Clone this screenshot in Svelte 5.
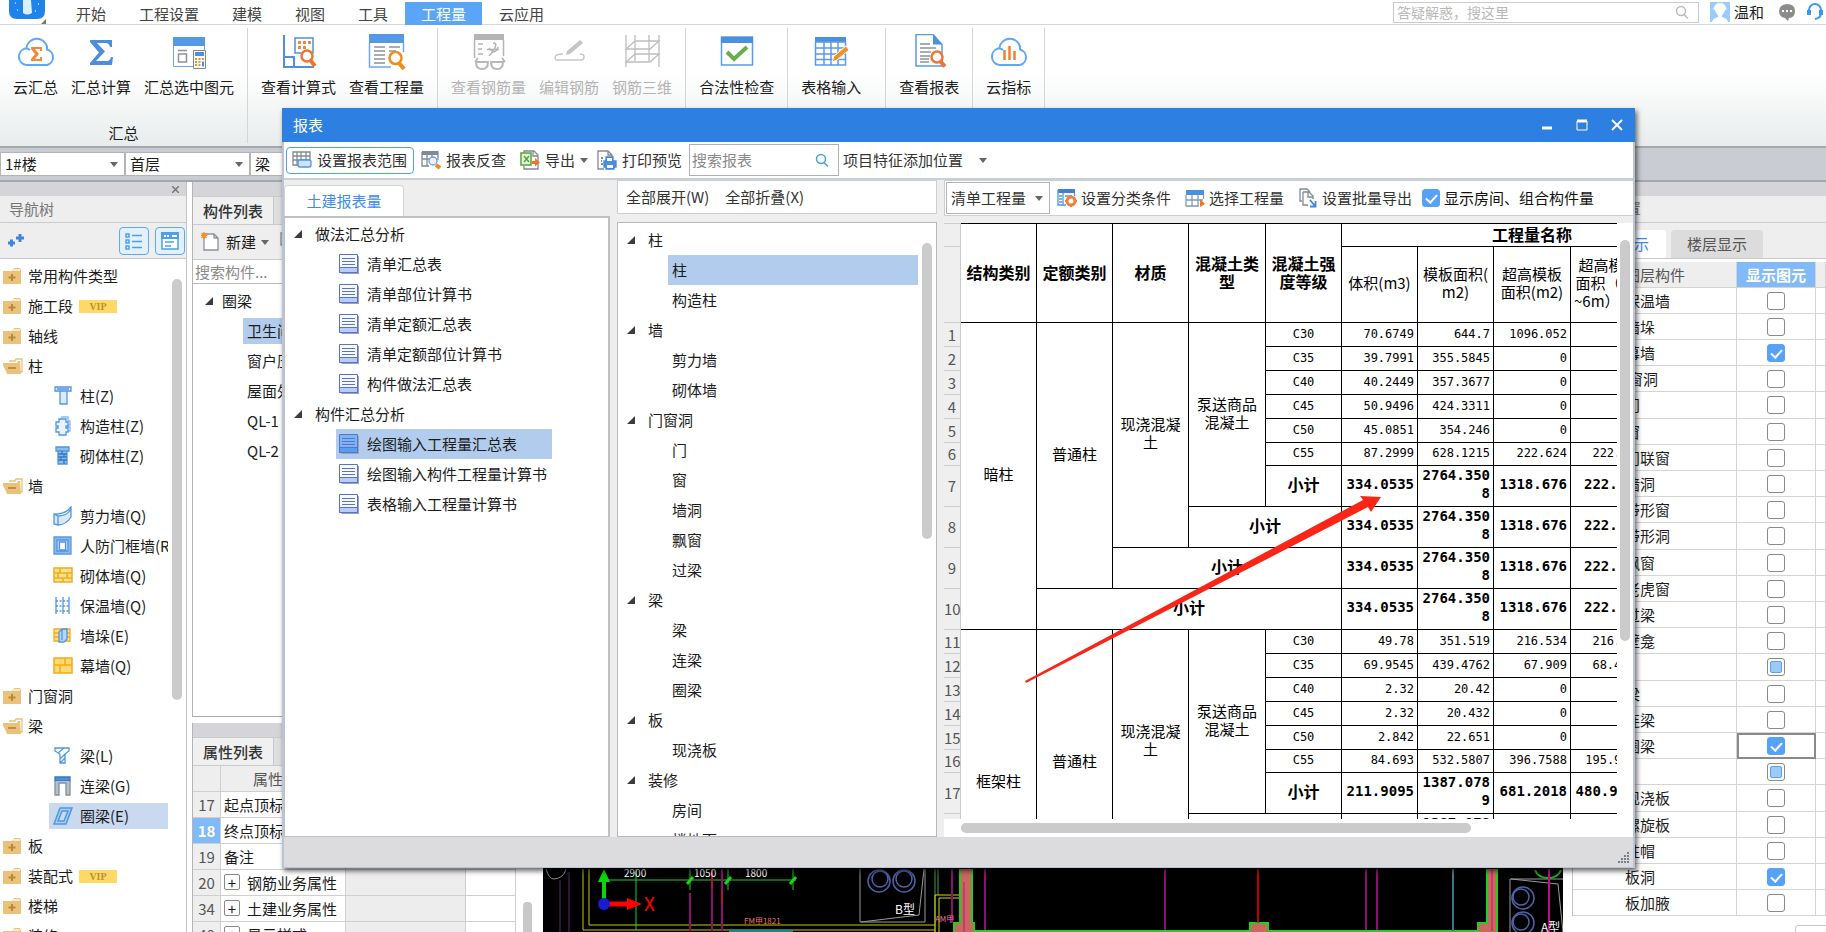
<script lang="ts">
	const menus = ['开始', '工程设置', '建模', '视图', '工具', '工程量', '云应用'];

	const ribbon = [
		{
			label: '汇总',
			items: [
				{ icon: 'cloudSum', text: '云汇总' },
				{ icon: 'sum', text: '汇总计算' },
				{ icon: 'sumSelected', text: '汇总选中图元' }
			]
		},
		{
			items: [
				{ icon: 'formula', text: '查看计算式' },
				{ icon: 'quantity', text: '查看工程量' }
			]
		},
		{
			disabled: true,
			items: [
				{ icon: 'rebar', text: '查看钢筋量' },
				{ icon: 'editRebar', text: '编辑钢筋' },
				{ icon: 'rebar3d', text: '钢筋三维' }
			]
		},
		{ items: [{ icon: 'check', text: '合法性检查' }] },
		{ wide: true, items: [{ icon: 'tableInput', text: '表格输入' }] },
		{ items: [{ icon: 'report', text: '查看报表' }] },
		{ items: [{ icon: 'cloudIndex', text: '云指标' }] }
	];

	const nav = [
		{ text: '常用构件类型' },
		{ text: '施工段', vip: true },
		{ text: '轴线' },
		{
			text: '柱',
			children: [
				{ icon: 'column', text: '柱(Z)' },
				{ icon: 'tieColumn', text: '构造柱(Z)' },
				{ icon: 'brickColumn', text: '砌体柱(Z)' }
			]
		},
		{
			text: '墙',
			children: [
				{ icon: 'shearWall', text: '剪力墙(Q)' },
				{ icon: 'frameWall', text: '人防门框墙(RF)' },
				{ icon: 'brickWall', text: '砌体墙(Q)' },
				{ icon: 'insulation', text: '保温墙(Q)' },
				{ icon: 'buttress', text: '墙垛(E)' },
				{ icon: 'curtainWall', text: '幕墙(Q)' }
			]
		},
		{ text: '门窗洞' },
		{
			text: '梁',
			children: [
				{ icon: 'beam', text: '梁(L)' },
				{ icon: 'linkBeam', text: '连梁(G)' },
				{ icon: 'ringBeam', text: '圈梁(E)', selected: true }
			]
		},
		{ text: '板' },
		{ text: '装配式', vip: true },
		{ text: '楼梯' },
		{ text: '装修' }
	];

	const components = ['卫生间翻边', '窗户压顶', '屋面外墙', 'QL-1', 'QL-2'];

	const properties = [
		{ no: 17, name: '起点顶标高' },
		{ no: 18, name: '终点顶标高', selected: true },
		{ no: 19, name: '备注' },
		{ no: 20, name: '钢筋业务属性', group: true },
		{ no: 34, name: '土建业务属性', group: true },
		{ no: 40, name: '显示样式', group: true }
	];

	const reportTree = [
		{
			text: '做法汇总分析',
			children: ['清单汇总表', '清单部位计算书', '清单定额汇总表', '清单定额部位计算书', '构件做法汇总表']
		},
		{
			text: '构件汇总分析',
			children: ['绘图输入工程量汇总表', '绘图输入构件工程量计算书', '表格输入工程量计算书']
		}
	];
	let activeReport = $state('绘图输入工程量汇总表');

	const elementTree = [
		{ text: '柱', children: ['柱', '构造柱'] },
		{ text: '墙', children: ['剪力墙', '砌体墙'] },
		{ text: '门窗洞', children: ['门', '窗', '墙洞', '飘窗', '过梁'] },
		{ text: '梁', children: ['梁', '连梁', '圈梁'] },
		{ text: '板', children: ['现浇板'] },
		{ text: '装修', children: ['房间', '楼地面'] }
	];
	let activeElement = $state('柱/柱');

	const colWidths = [17, 76, 76, 76, 77, 76, 76, 76, 77, 76, 76];
	const dimensions = ['结构类别', '定额类别', '材质', '混凝土类型', '混凝土强度等级'];
	const measures = ['体积(m3)', '模板面积(\nm2)', '超高模板\n面积(m2)', '超高模板\n面积（3.6\n~6m）(m2)', ''];

	const groups = [
		{
			name: '暗柱',
			start: 1,
			rows: [
				['C30', '70.6749', '644.7', '1096.052', '', ''],
				['C35', '39.7991', '355.5845', '0', '', ''],
				['C40', '40.2449', '357.3677', '0', '', ''],
				['C45', '50.9496', '424.3311', '0', '', ''],
				['C50', '45.0851', '354.246', '0', '', ''],
				['C55', '87.2999', '628.1215', '222.624', '222.624', '']
			],
			total: ['334.0535', '2764.3508', '1318.676', '222.624', '']
		},
		{
			name: '框架柱',
			start: 11,
			rows: [
				['C30', '49.78', '351.519', '216.534', '216.534', ''],
				['C35', '69.9545', '439.4762', '67.909', '68.4762', ''],
				['C40', '2.32', '20.42', '0', '', ''],
				['C45', '2.32', '20.432', '0', '', ''],
				['C50', '2.842', '22.651', '0', '', ''],
				['C55', '84.693', '532.5807', '396.7588', '195.9588', '']
			],
			total: ['211.9095', '1387.0789', '681.2018', '480.9688', '']
		}
	];

	let layers = $state([
		{ text: '保温墙', on: false },
		{ text: '墙垛', on: false },
		{ text: '幕墙', on: true },
		{ text: '门窗洞', on: false, parent: true },
		{ text: '门', on: false },
		{ text: '窗', on: false },
		{ text: '门联窗', on: false },
		{ text: '墙洞', on: false },
		{ text: '带形窗', on: false },
		{ text: '带形洞', on: false },
		{ text: '飘窗', on: false },
		{ text: '老虎窗', on: false },
		{ text: '过梁', on: false },
		{ text: '壁龛', on: false },
		{ text: '梁', on: false, parent: true, partial: true },
		{ text: '梁', on: false },
		{ text: '连梁', on: false },
		{ text: '圈梁', on: true, current: true },
		{ text: '板', on: false, parent: true, partial: true },
		{ text: '现浇板', on: false },
		{ text: '螺旋板', on: false },
		{ text: '柱帽', on: false },
		{ text: '板洞', on: true },
		{ text: '板加腋', on: false }
	]);
</script>

{#snippet ribbonIcon(name: string)}
	<svg width="40" height="36" viewBox="0 0 40 36" fill="none" aria-hidden="true">
		{#if name === 'cloudSum' || name === 'cloudIndex'}
			<path d="M10 31a8.500 8.500 0 0 1-1-16.500q3-.5 5 1.500M10.500 13.500A10.500 10.500 0 0 1 31 12.500v3A8 8 0 0 1 31 31H10" stroke="#5fa8f5" stroke-width="2" />
			{#if name === 'cloudSum'}
				<path d="M15 13h11v4h-2v-2h-5l4 5-4 5h5v-2h2v4H15v-2l4-5-4-5z" fill="#f08a3c" />
			{:else}
				<path d="M15.500 16v10M20.500 12v14M25.500 17v9" stroke="#f08038" stroke-width="2.500" />
			{/if}
		{:else if name === 'sum'}
			<path d="M9 6h22v7h-2q-1-4-4-4h-9l8 8.500L15 27h11q3 0 4-4h2l-1 8H9v-2l9-10.500L9 8z" fill="#4a8edd" />
		{:else if name === 'sumSelected'}
			<path d="M4 3h32v9H4z" fill="#5598e5" />
			<path d="M4.500 12v20.500H24M35.500 12v5" stroke="#6fa6e6" />
			<path d="M9 16.500h9M9.500 20h8v8h-8z" stroke="#8a939b" stroke-width="1.500" />
			<path d="M24.500 16.500h12v18h-12z" stroke="#7c868e" fill="#fff" />
			<path d="M26 18h9v4h-9z" fill="#4a90e2" />
			<path d="M26 25h2M29.500 25h2M33 25h2M26 28h2M29.500 28h2M26 31h2M29.500 31h2" stroke="#f08a3c" stroke-width="2" />
			<path d="M33 27.500h2v5h-2z" fill="#4a90e2" />
		{:else if name === 'formula'}
			<path d="M5 1v32h30M5 23h10v10" stroke="#5090d8" stroke-width="2" />
			<path d="M16 4h18v15H16z" stroke="#5090d8" stroke-width="1.500" fill="#fff" />
			<path d="M19 8.500h3M24 8.500h3M29 8.500h3M19 13.500h3M24 13.500h3" stroke="#f0863c" stroke-width="3" />
			<circle cx="28" cy="22" r="5.500" stroke="#ee7530" stroke-width="2.500" fill="#fff" />
			<path d="M31.500 26.500l4.500 5.500" stroke="#ee7530" stroke-width="4" />
		{:else if name === 'quantity'}
			<path d="M2 0h35v9H2z" fill="#5598e5" />
			<path d="M2.500 9v24H24M36.500 9v9" stroke="#6fa6e6" stroke-width="1.500" />
			<path d="M7 13h11M22 13h11M7 17h11M22 17h7M7 21h11M7 25h11M7 29h11" stroke="#8a939b" stroke-width="1.500" />
			<circle cx="28.500" cy="24" r="6" stroke="#f08c1c" stroke-width="2.500" fill="#fff" />
			<path d="M32 29l5 6" stroke="#f08c1c" stroke-width="4" />
		{:else if name === 'rebar'}
			<path d="M5 0h30v6H5z" fill="#b4b4b4" />
			<path d="M5.500 6v18M34.500 6v16M9 10h5M9 15h4M9 20h5M18 15.500h12M24 9q5 0 1 6.500T20 21M29 13q-3 9-9 1" stroke="#b4b4b4" stroke-width="1.500" />
			<path d="M6 28l3-4M36 28l-3-4M7 28h12q0 7-6 7t-6-7zM22 28h12q0 7-6 7t-6-7z" stroke="#b8b8b8" stroke-width="2" />
		{:else if name === 'editRebar'}
			<path d="M14 20Q6 20 6 23.500T10 26h22q3 0 3-3t-4-3" stroke="#c8c8c8" stroke-width="1.500" />
			<path d="M17 21l1-4L31 6l3 3-13 11z" fill="#c4c4c4" />
		{:else if name === 'rebar3d'}
			<path d="M4 1v32M13 1v26M27 1v26M37 1v32M4 15h24l9-8H13zM4 28h24l9-8H13z" stroke="#bdbdbd" stroke-width="1.300" />
		{:else if name === 'check'}
			<path d="M4.500 3h31v28h-31z" stroke="#5a9be6" fill="#fff" stroke-width="1.500" />
			<path d="M4 3h32v6H4z" fill="#4a90de" />
			<path d="M10 18l7 7 13-12" stroke="#69ad4e" stroke-width="4" />
		{:else if name === 'tableInput'}
			<path d="M4 3h31v5H4z" fill="#4a90de" />
			<path d="M4.500 8h30v23h-30zM4 14h31M4 20h31M4 25.500h31M13 8v23M20 8v23M27 8v23" stroke="#5a9be6" stroke-width="1.500" />
			<path d="M21 28l2-6 12-10 3 4-12 10z" fill="#f09022" stroke="#fff" />
		{:else if name === 'report'}
			<path d="M7 .500h17l9 10V32H7z" stroke="#5a9be6" stroke-width="1.500" fill="#fff" />
			<path d="M24 .500v10h9z" fill="#4a90de" />
			<path d="M11 10h10M11 14h16M11 18h11M11 22h10M11 25h9M11 28h9" stroke="#8a939b" stroke-width="1.500" />
			<circle cx="28" cy="23" r="5.500" stroke="#ee7530" stroke-width="2.500" fill="#fff" />
			<path d="M31.500 27.500l4.500 5" stroke="#ee7530" stroke-width="4" />
		{/if}
	</svg>
{/snippet}

{#snippet icon(name: string)}
	<svg width="20" height="20" viewBox="0 0 20 20" fill="none" stroke="#4f97df" stroke-width="1.300" aria-hidden="true">
		{#if name === 'folder'}
			<path d="M0 5h9l2-3h6l1 2v14H0z" fill="#eac27c" stroke="none" />
			<path d="M10 4h7" stroke="#fff" />
			<path d="M9 8v7M5.500 11.500h7" stroke="#b98a35" stroke-width="2" />
		{:else if name === 'folderOpen'}
			<path d="M6 5h6l1-2h6v13h-2" fill="#fff" stroke="#eac27c" />
			<path d="M-1 7h15l1-2h2l1 13H4z" fill="#eac27c" stroke="none" />
			<path d="M5 12h8" stroke="#a88035" stroke-width="1.500" />
		{:else if name === 'column'}
			<path d="M2 1h16v4H2zM7 5v13h7V5M4 3h12" fill="#dcebfa" />
		{:else if name === 'tieColumn'}
			<path d="M8 1h7v4h2v4h-2v2h2v4h-2" stroke="#8dbbea" />
			<path d="M6 3h7v3h2v4h-2v2h2v4h-2v3H6v-3H3v-4h2v-2H3V6h3z" fill="#eaf3fc" />
		{:else if name === 'brickColumn'}
			<path d="M3 1h13v4H3zM5 5v13h9V5" fill="#8dbbea" />
			<path d="M5 8h9M5 11h9M5 14h9M9 5v3M11 8v3M8 11v3M11 14v4" stroke="#3678bf" />
		{:else if name === 'shearWall'}
			<path d="M1 8q11 1 17-7v10q-5 8-13 8l-4-1zM1 8l4 2q9 0 13-7M5 10v9" fill="#dbe8f8" />
		{:else if name === 'frameWall'}
			<path d="M1 1h17v17H1z" fill="#8db6ec" stroke="#5d97e0" />
			<path d="M4 4h11v11H4z" fill="#bcd5f5" />
			<path d="M6.500 6h6v8h-6z" fill="#fff" />
		{:else if name === 'brickWall'}
			<path d="M1 2h18v14H1zM1 7h18M1 12h18M7 2v5M14 7v5M5 7v5M10 12v4" fill="#ffe08c" stroke="#f0ac1c" stroke-width="1.500" />
		{:else if name === 'insulation'}
			<path d="M3 1v17M10 1v17M16 1v17" />
			<path d="M3 5h13M3 10h13M3 15h13" stroke-dasharray="2 1.500" />
		{:else if name === 'buttress'}
			<path d="M1 3h16v12H1zM1 7h16M1 11h16" fill="#ffe08c" stroke="#f0ac1c" />
			<path d="M6 6l3-3h5v10l-3 3H6zM9 3v11" fill="#b7d6f7" />
		{:else if name === 'curtainWall'}
			<path d="M1 2h18v15H1zM1 9h18M12 2v7M7 9v8" fill="#ffd970" stroke="#f0ac1c" stroke-width="1.500" />
		{:else if name === 'beam'}
			<path d="M2 2h14v3l-4 3v9H7V8L2 5zM5 7l6-5M7 13l5-5M7 17l5-5" fill="#fff" />
		{:else if name === 'linkBeam'}
			<path d="M2 1h15v4H2z" fill="#4a90de" stroke="#3678bf" />
			<path d="M2 5v14h4V7h7v12h4V5" fill="#b7c0c8" stroke="#84919c" />
		{:else if name === 'ringBeam'}
			<path d="M7 2h12l-6 16H1zM9 5h6l-4 10H5z" fill="#a9cdf4" fill-rule="evenodd" stroke-width="1.500" />
		{:else if name === 'range'}
			<path d="M1 2h17v13H1zM1 6h17M1 10h17M5 2v13M9 2v13M14 2v13" stroke="#7f8b95" />
			<rect x="6" y="10" width="13" height="7" rx="2" fill="#cfe4fb" />
		{:else if name === 'trace'}
			<path d="M1 1h16v4H1z" fill="#7f8b95" stroke="none" />
			<path d="M1 2h16v8M1 2v14h7M1 9h8M6 5v11M11 5v3" stroke="#7f8b95" />
			<circle cx="12" cy="11" r="4" fill="#eaf3fd" stroke="#6b9ee0" />
			<path d="M15 15l4 3" stroke="#f08a1c" stroke-width="4" />
		{:else if name === 'export'}
			<path d="M4 3V1h10l4 4v14H4v-3M13 1v5h5" stroke="#7f8b95" />
			<path d="M1 3h10v12H1z" fill="#e4f3dd" stroke="#5ba33b" stroke-width="1.500" />
			<path d="M4 6l5 6M9 6l-5 6" stroke="#5ba33b" stroke-width="1.500" />
			<path d="M12 11h3V8l5 4.500-5 4V14h-3z" fill="#f0742c" stroke="none" />
		{:else if name === 'print'}
			<path d="M7 19H1V1h10l4 4v3M11 1v4h4" stroke="#7f8b95" />
			<path d="M4 8h2M4 11h1M4 14h2" stroke="#7f8b95" stroke-width="2" />
			<path d="M9 7h7v4h3v6h-2v2H9v-2H7v-6h2z" fill="#4a90e2" stroke="#3f86da" />
			<path d="M10 8h5v3h-5zM10 15h6v3h-6z" fill="#fff" stroke="none" />
		{:else if name === 'classify'}
			<path d="M1 1h17v4H1z" fill="#3f80d0" stroke="none" />
			<path d="M1 2v15h8M17.500 5v3M6 5v12" />
			<path d="M2 8h3M2 11h3M2 14h3M8 8h6" />
			<circle cx="14" cy="13" r="4" stroke="#f08038" stroke-width="3" fill="#fff" />
			<path d="M14 7v2M14 17v2M8 13h2M18 13h2" stroke="#f08038" stroke-width="2" />
		{:else if name === 'choose'}
			<path d="M1 2h18v5H1z" fill="#4a90de" stroke="none" />
			<path d="M1 7v11h13M18.500 7v4M1 12h17M7 7v11M13 7v11" stroke="#7f9bb5" />
			<path d="M15 11l5 5-5 3z" fill="#f0742c" stroke="none" />
		{:else if name === 'batch'}
			<path d="M4 13H2V1h7l3 3M5 4h6l4 4v3M5 4v13h5M10 4v5h5" stroke="#7f8b95" />
			<path d="M12 12l5 6M17.500 13v5.500H12" stroke="#3f86da" stroke-width="1.800" />
		{:else if name === 'new'}
			<path d="M3 2h10l4 4v12H3zM13 2v4h4" fill="#fff" stroke="#8a939b" />
			<path d="M3 0v7M-.500 3.500h7M.500 1l5 5M5.500 1l-5 5" stroke="#f0902c" />
		{/if}
	</svg>
{/snippet}

{#snippet caret()}
	<svg class="caret" width="8" height="5" viewBox="0 0 8 5" aria-hidden="true"><path d="M0 0h8L4 5z" fill="#666" /></svg>
{/snippet}

{#snippet twisty()}
	<svg width="9" height="8" viewBox="0 0 9 8" aria-hidden="true"><path d="M0 8L8 0v8z" fill="#3c3c3c" /></svg>
{/snippet}

{#snippet magnifier(color: string)}
	<svg width="14" height="14" viewBox="0 0 14 14" fill="none" stroke={color} stroke-width="1.500" aria-hidden="true">
		<circle cx="6" cy="6" r="4.500" /><path d="M9 9.500l4 4" />
	</svg>
{/snippet}

<div class="app">
	<header class="menubar">
		<svg class="logo" width="46" height="25" viewBox="0 0 46 25" aria-hidden="true">
			<path d="M9 0h36v11q0 8-8 8H17q-8 0-8-8z" fill="#1f83ea" />
			<path d="M23 0h8l1 13q-5 3-9 0z" fill="#d8f0ff" />
			<path d="M15 3h1M38 4h1M35 11h1M17 10h1" stroke="#9bd4ff" stroke-width="2" />
			<path d="M46 24h-5l5-5z" fill="#777" />
		</svg>
		<nav>
			{#each menus as menu}
				<button class:active={menu === '工程量'}>{menu}</button>
			{/each}
		</nav>
		<label class="ask">
			<input type="text" placeholder="答疑解惑，搜这里" aria-label="答疑解惑" />
			{@render magnifier('#bbb')}
		</label>
		<button class="user">
			<svg width="20" height="20" viewBox="0 0 20 20" aria-hidden="true">
				<path d="M0 0h20v20H0z" fill="#9ccbfa" />
				<path d="M4 6q1-5 6-5t6 5l1 1-2 1q-1 4-3 5v2q5 1 6 5H2q1-4 6-5v-2Q6 12 5 8L3 7z" fill="#fff" />
			</svg>
			温和
		</button>
		<svg width="18" height="18" viewBox="0 0 18 18" aria-hidden="true">
			<path d="M9 1q8 0 8 7t-6 7l-1 3-3-3Q1 14 1 8t8-7z" fill="#8c8c8c" />
			<path d="M4 8h2M8 8h2M12 8h2" stroke="#fff" stroke-width="2" />
		</svg>
		<svg width="18" height="18" viewBox="0 0 18 18" fill="none" stroke="#3f97f0" aria-hidden="true">
			<path d="M3 9V7a6 6 0 0 1 12 0v3q0 5-6 6" stroke-width="2" />
			<path d="M3 7v5M15 7v5" stroke-width="4" />
		</svg>
	</header>

	<section class="ribbon">
		{#each ribbon as group}
			<div class="group" class:wide={group.wide}>
				<div class="tools">
					{#each group.items as item}
						<button disabled={group.disabled}>
							{@render ribbonIcon(item.icon)}
							{item.text}
						</button>
					{/each}
				</div>
				<span>{group.label ?? ''}</span>
			</div>
		{/each}
	</section>

	<section class="floorbar">
		<label class="pick"><select aria-label="楼栋"><option>1#楼</option></select>{@render caret()}</label>
		<label class="pick"><select aria-label="楼层"><option>首层</option></select>{@render caret()}</label>
		<label class="pick"><select aria-label="构件类型"><option>梁</option></select>{@render caret()}</label>
	</section>

	<main class="workspace">
		<aside class="nav">
			<div class="strip">
				<button aria-label="关闭"><svg width="7" height="7" viewBox="0 0 7 7"><path d="M0 0l7 7M7 0L0 7" stroke="#777" stroke-width="1.500" /></svg></button>
			</div>
			<h2>导航树</h2>
			<div class="navtools">
				<svg width="16" height="13" viewBox="0 0 16 13" stroke="#3f86da" stroke-width="3" aria-hidden="true">
					<path d="M0 9h7M3.500 5.500v7M8 4h8M12 0v8" />
				</svg>
				<button class="toggle" aria-label="列表">
					<svg width="18" height="18" viewBox="0 0 18 18" fill="none" stroke="#4f9fee" stroke-width="1.500" aria-hidden="true">
						<path d="M1 2h3v3H1zM1 8h3v3H1zM1 14h3v3H1zM7 3.500h10M7 9.500h10M7 15.500h10" />
					</svg>
				</button>
				<button class="toggle" aria-label="面板">
					<svg width="18" height="18" viewBox="0 0 18 18" fill="none" stroke="#4f9fee" stroke-width="1.500" aria-hidden="true">
						<path d="M1 1h16v16H1z" fill="#fff" /><path d="M0 0h18v7H0z" fill="#4f9fee" stroke="none" />
						<path d="M3 4h2M6 4h2M11 4h5" stroke="#fff" stroke-width="2" /><path d="M4 10h9M4 14h6" />
					</svg>
				</button>
			</div>
			<ul class="navtree">
				{#each nav as node}
					<li>
						<button class="folder">
							{@render icon(node.children ? 'folderOpen' : 'folder')}
							{node.text}
							{#if node.vip}<em>VIP</em>{/if}
						</button>
						{#each node.children ?? [] as child}
							<button class="leaf" class:selected={child.selected}>
								{@render icon(child.icon)}
								{child.text}
							</button>
						{/each}
					</li>
				{/each}
			</ul>
			<span class="thumb"></span>
		</aside>

		<div class="side">
			<section class="complist">
				<div class="strip"></div>
				<div class="tabs"><button>构件列表</button></div>
				<div class="comptools">
					<button>{@render icon('new')} 新建 {@render caret()}</button>
					<button aria-label="复制">{@render icon('batch')}</button>
				</div>
				<input type="text" placeholder="搜索构件..." aria-label="搜索构件" />
				<div class="comptree">
					<button class="root">{@render twisty()} 圈梁</button>
					{#each components as name, i}
						<button class="item" class:selected={i === 0}>{name}</button>
					{/each}
				</div>
			</section>
			<section class="props">
				<div class="strip"></div>
				<div class="tabs"><button>属性列表</button></div>
				<div class="proprow">
					<table>
						<colgroup><col class="no" /><col class="name" /><col /><col class="extra" /></colgroup>
						<thead>
							<tr><th></th><th>属性名称</th><th></th><th></th></tr>
						</thead>
						<tbody>
							{#each properties as p}
								<tr>
									<th class:selected={p.selected}>{p.no}</th>
									<td>{#if p.group}<button class="plus" aria-label="展开">+</button>{/if}{p.name}</td>
									<td class:shade={p.group}></td>
									<td></td>
								</tr>
							{/each}
						</tbody>
					</table>
					<span class="track"><i></i></span>
				</div>
			</section>
		</div>

		<section class="canvas">
			<svg height="63" viewBox="543 869 1020 63" preserveAspectRatio="xMinYMax slice" fill="none" aria-label="平面图">
				<path d="M546 869q3 10 8 10 10-1 12-10" stroke="#8a8a8a" />
				<path d="M560 880v52M569 872v60" stroke="#5a2a6a" />
				<path d="M583 869v61h352M589 869v56h346" stroke="#c8c800" />
				<path d="M608 880h188M636 869v61M690 869v21M728 869v21M793 869v21" stroke="#1fd01f" />
				<path d="M687 884l6-7M725 884l6-7M790 884l6-7" stroke="#1fd01f" stroke-width="3" />
				<path d="M690 893v38M712 869v62M722 869v62" stroke="#8c1070" stroke-width="2" />
				<path d="M712 869v20M722 890v14" stroke="#d01010" />
				<path d="M604 900v-20" stroke="#0bd60b" stroke-width="4" />
				<path d="M598 882l6-13 6 13z" fill="#0bd60b" />
				<path d="M609 904h22" stroke="#f00" stroke-width="5" />
				<path d="M627 898l15 6-15 6z" fill="#f00" />
				<circle cx="604" cy="904" r="6" fill="#1a1ad0" />
				<path d="M729 931h64" stroke="#11898f" stroke-width="3" />
				<path d="M860 869v53h65v-53M924 869l-5 46-58 7" stroke="#9a9a9a" />
				<g stroke="#4d62a8" stroke-width="1.500">
					<circle cx="879" cy="881" r="11" /><circle cx="880" cy="879" r="8" />
					<circle cx="904" cy="881" r="11" /><circle cx="904" cy="879" r="8" />
					<circle cx="1523" cy="898" r="11" /><circle cx="1521" cy="897" r="8" />
					<circle cx="1523" cy="923" r="11" /><circle cx="1521" cy="922" r="8" />
				</g>
				<path d="M935 869v63M938 869v26" stroke="#3ea04a" />
				<path d="M935 895h25M935 932v-37M939 932v-34h21" stroke="#d8d800" />
				<path d="M952 869v54M985 869v62M1165 869v62M1366 869v62M1377 869v62" stroke="#8c1070" stroke-width="2" />
				<path d="M960 869v54h-6v10M972 869v54h2v8h276v-8h18v8h210v-8h9v-54M1497 869v64" stroke="#1fd01f" stroke-width="2" />
				<path d="M961 869h10v54h2v10h-18v-9h6zM1251 924h16v8h-16zM1488 869h8v64h-17v-9h9z" fill="#cc6660" />
				<path d="M964 882v50M1492 869v62" stroke="#c01080" />
				<path d="M1258 869v54" stroke="#f00" stroke-width="1.500" />
				<path d="M1453 869v62" stroke="#3a7686" stroke-width="2" />
				<path d="M1563 879h-53v53M1511 879l47 5 5 48" stroke="#9a9a9a" />
				<path d="M1535 870q3 8 13 8t13-8" stroke="#1fb01f" stroke-width="2" />
				<path d="M1549 869v63" stroke="#c01080" stroke-width="2" />
				<g fill="#fff" font-size="10">
					<text x="624" y="877">2900</text>
					<text x="694" y="877">1050</text>
					<text x="745" y="877">1800</text>
					<text x="895" y="914" font-size="12">B型</text>
					<text x="1541" y="932" font-size="12">A型</text>
				</g>
				<text x="644" y="911" fill="#f00" font-size="19">X</text>
				<text x="744" y="924" fill="#f07070" font-size="8">FM甲1821</text>
				<text x="935" y="922" fill="#f070b0" font-size="8">AM甲</text>
			</svg>
		</section>

		<aside class="layers">
			<div class="strip"></div>
			<h2>显示设置</h2>
			<div class="layertabs">
				<button class="on">图元显示</button>
				<button>楼层显示</button>
			</div>
			<table>
				<colgroup><col /><col class="show" /><col class="rest" /></colgroup>
				<thead>
					<tr><th>图层构件</th><th class="hot">显示图元</th><th></th></tr>
				</thead>
				<tbody>
					{#each layers as layer}
						<tr>
							<td class:parent={layer.parent}>{layer.text}</td>
							<td class="box" class:current={layer.current}>
								<input type="checkbox" bind:checked={layer.on} indeterminate={layer.partial ?? false} aria-label={layer.text} />
							</td>
							<td></td>
						</tr>
					{/each}
				</tbody>
			</table>
			<button class="reset" aria-label="恢复默认"></button>
		</aside>
	</main>

	<section class="dialog" role="dialog" aria-label="报表">
		<header class="titlebar">
			<h1>报表</h1>
			<button aria-label="最小化"><svg width="12" height="12" viewBox="0 0 12 12"><path d="M1 9h10" stroke="#fff" stroke-width="3" /></svg></button>
			<button aria-label="最大化"><svg width="12" height="12" viewBox="0 0 12 12"><path d="M1 2h10v9H1z" fill="none" stroke="#fff" /><path d="M1 2h10" stroke="#fff" stroke-width="3" /></svg></button>
			<button aria-label="关闭"><svg width="12" height="12" viewBox="0 0 12 12"><path d="M1 1l10 10M11 1L1 11" stroke="#fff" stroke-width="2" /></svg></button>
		</header>

		<div class="toolbar">
			<button class="framed">{@render icon('range')}设置报表范围</button>
			<button>{@render icon('trace')}报表反查</button>
			<button class="export">{@render icon('export')}导出{@render caret()}</button>
			<button>{@render icon('print')}打印预览</button>
			<label class="find">
				<input type="text" placeholder="搜索报表" aria-label="搜索报表" />
				{@render magnifier('#4a9fcf')}
			</label>
			<button class="position">项目特征添加位置{@render caret()}</button>
		</div>

		<div class="panes">
			<div class="reports">
				<button class="tab">土建报表量</button>
				<div class="tree">
					{#each reportTree as node}
						<button class="root">{@render twisty()}{node.text}</button>
						{#each node.children as child}
							<button class="doc" class:selected={child === activeReport} onclick={() => (activeReport = child)}>
								<svg width="20" height="20" viewBox="0 0 20 20" fill="none" stroke="#5774c8" aria-hidden="true">
									<path d="M2 2h18v18H3l-2-2z" fill="#9aa2b8" stroke="none" />
									<path class="page" d="M.500.500h18v18H.500z" />
									<path class="foot" d="M.500 13.500h18v5H.500z" />
									<path d="M3 4.500h13M3 7.500h13M3 10.500h13" />
								</svg>
								{child}
							</button>
						{/each}
					{/each}
				</div>
			</div>

			<div class="elements">
				<div class="bar">
					<button>全部展开(W)</button>
					<button>全部折叠(X)</button>
				</div>
				<div class="tree">
					{#each elementTree as node}
						<button class="root">{@render twisty()}{node.text}</button>
						{#each node.children as child}
							{@const key = node.text + '/' + child}
							<button class="child" class:selected={key === activeElement} onclick={() => (activeElement = key)}>{child}</button>
						{/each}
					{/each}
					<span class="thumb"></span>
				</div>
			</div>

			<div class="sheet">
				<div class="bar">
					<label class="pick"><select aria-label="工程量类型"><option>清单工程量</option></select>{@render caret()}</label>
					<button>{@render icon('classify')}设置分类条件</button>
					<button>{@render icon('choose')}选择工程量</button>
					<button>{@render icon('batch')}设置批量导出</button>
					<label class="rooms"><input type="checkbox" checked />显示房间、组合构件量</label>
				</div>
				<div class="grid">
					<div class="clip">
						<table>
							<colgroup>
								{#each colWidths as w}<col style="width: {w}px" />{/each}
							</colgroup>
							<thead>
								<tr class="caption">
									<th class="num"></th>
									{#each dimensions as d}<th rowspan="2">{d}</th>{/each}
									<th colspan="5">工程量名称</th>
								</tr>
								<tr class="names">
									<th class="num"></th>
									{#each measures as m}<td class="measure">{m}</td>{/each}
								</tr>
							</thead>
							<tbody>
								{#each groups as g}
									{#each g.rows as row, i}
										<tr class={i === 5 ? 'last' : 'line'}>
											<th class="num">{g.start + i}</th>
											{#if i === 0}
												<td class="text" rowspan="10">{g.name}</td>
												<td class="text" rowspan="9">普通柱</td>
												<td class="text" rowspan="8">现浇混凝土</td>
												<td class="text" rowspan="7">泵送商品混凝土</td>
											{/if}
											{#each row as cell, c}<td class:grade={c === 0}>{cell}</td>{/each}
										</tr>
									{/each}
									{#each [1, 2, 3, 4] as span}
										<tr class="total">
											<th class="num">{g.start + 5 + span}</th>
											<th colspan={span}>小计</th>
											{#each g.total as cell}<td>{cell}</td>{/each}
										</tr>
									{/each}
								{/each}
							</tbody>
						</table>
					</div>
					<span class="vthumb"></span>
					<span class="hthumb"></span>
					<svg class="pointer" width="360" height="190" viewBox="0 0 360 190" aria-hidden="true">
						<path d="M1 186L339 5l-3-4 21 1-10 15-3-5L2 188z" fill="#f92617" />
					</svg>
				</div>
			</div>
		</div>

		<footer>
			<svg width="12" height="12" viewBox="0 0 12 12" stroke="#777f88" stroke-width="2" stroke-dasharray="2 1" aria-hidden="true">
				<path d="M0 11h12M3 8h9M6 5h6M9 2h3" />
			</svg>
		</footer>
	</section>
</div>

<style>
	:global(body) {
		background: #fff;
	}

	.app {
		position: relative;
		display: flex;
		flex-direction: column;
		height: 100vh;
		overflow: hidden;
		font-family: 'Noto Sans CJK SC', 'Noto Sans', sans-serif;
		font-size: 15px;
		line-height: 20px;
		color: #1c1c1c;
	}

	.app * {
		box-sizing: border-box;
	}

	button,
	input,
	select {
		font: inherit;
		color: inherit;
		margin: 0;
		padding: 0;
		border: 0;
		background: none;
		white-space: nowrap;
	}

	input[type='text'] {
		min-width: 0;
		outline: 0;
	}

	svg {
		flex: none;
	}

	h1,
	h2,
	ul {
		margin: 0;
		padding: 0;
		font-size: 15px;
		font-weight: 400;
		list-style: none;
	}

	table {
		border-spacing: 0;
		table-layout: fixed;
	}

	input[type='checkbox'] {
		appearance: none;
		position: relative;
		display: block;
		width: 18px;
		height: 18px;
		border: 1px solid #8a8a8a;
		border-radius: 3px;
		background: #fff;
	}

	input[type='checkbox']:checked {
		border-color: #55a2f8;
		background: #55a2f8;
	}

	input[type='checkbox']:checked::before {
		content: '';
		position: absolute;
		left: 5px;
		top: 2px;
		width: 5px;
		height: 9px;
		border: solid #fff;
		border-width: 0 2px 2px 0;
		transform: rotate(42deg);
	}

	input[type='checkbox']:indeterminate::before {
		content: '';
		position: absolute;
		inset: 2px;
		border: 1px solid #55a2f8;
		border-radius: 2px;
		background: #9ccafc;
	}

	/* menu bar */
	.menubar {
		display: flex;
		flex: none;
		align-items: center;
		height: 25px;
		border-bottom: 1px solid #d5d7d9;
		color: #444;
	}

	.menubar nav {
		display: flex;
		align-self: stretch;
		flex: 1;
		gap: 1px;
		padding-left: 14px;
	}

	.menubar nav button {
		height: 23px;
		margin-top: 2px;
		padding: 0 16px;
		line-height: 20px;
	}

	.menubar nav .active {
		background: #5ba5f8;
		color: #fff;
	}

	.ask {
		display: flex;
		align-items: center;
		width: 306px;
		height: 21px;
		padding: 0 9px 0 3px;
		border: 1px solid #c8ccd0;
	}

	.ask input {
		flex: 1;
		font-size: 14px;
	}

	.ask input::placeholder {
		color: #b9b9b9;
	}

	.user {
		display: flex;
		align-items: center;
		gap: 4px;
		margin: 0 14px 0 11px;
		color: #222;
	}

	.menubar > svg:last-child {
		margin: 0 2px 0 10px;
	}

	/* ribbon */
	.ribbon {
		display: flex;
		flex: none;
		height: 121px;
		padding-top: 3px;
		background: linear-gradient(#fff 40%, #e8ecec);
	}

	.group {
		display: flex;
		flex-direction: column;
		justify-content: space-between;
		height: 115px;
		padding: 6px 13px 0;
		border-right: 1px solid #d3d6d8;
		text-align: center;
	}

	.group.wide {
		padding-right: 24px;
	}

	.group > span {
		height: 20px;
	}

	.tools {
		display: flex;
		gap: 13px;
	}

	.tools button {
		display: flex;
		flex-direction: column;
		align-items: center;
		gap: 7px;
	}

	.tools button:disabled {
		color: #b4b4b4;
	}

	/* floor selectors */
	.floorbar {
		display: flex;
		flex: none;
		height: 36px;
		padding: 4px 0;
		border-top: 2px solid #a4a7ab;
		border-bottom: 2px solid #a4a7ab;
		background: #c9ccd2;
	}

	.pick {
		display: flex;
		align-items: center;
		position: relative;
		width: 125px;
		border: 1px solid #b4b4b4;
		background: #fff;
	}

	.pick select {
		appearance: none;
		width: 100%;
		padding-left: 4px;
	}

	.pick .caret {
		position: absolute;
		right: 6px;
		pointer-events: none;
	}

	/* workspace */
	.workspace {
		display: flex;
		flex: 1;
		min-height: 0;
		background: #fff;
	}

	.strip {
		flex: none;
		height: 14px;
		background: #d4d4d9;
	}

	.nav {
		position: relative;
		display: flex;
		flex-direction: column;
		width: 187px;
		margin-right: 5px;
		border-right: 1px solid #c4c4c4;
	}

	.nav .strip {
		display: flex;
		align-items: center;
		justify-content: flex-end;
		padding-right: 7px;
	}

	.nav .strip button {
		display: flex;
	}

	.nav h2,
	.layers h2 {
		flex: none;
		height: 27px;
		padding-left: 9px;
		border-bottom: 1px solid #c8cbce;
		background: #eee;
		color: #777;
		line-height: 26px;
	}

	.navtools {
		display: flex;
		flex: none;
		align-items: center;
		gap: 6px;
		height: 36px;
		padding: 0 1px 0 8px;
		border-bottom: 1px solid #c8cbce;
		background: #eee;
	}

	.navtools > svg {
		margin-right: auto;
	}

	.toggle {
		display: grid;
		place-items: center;
		width: 30px;
		height: 28px;
		border: 1px solid #5aa9f2;
		border-radius: 4px;
		background: #e3f0fd;
	}

	.navtree {
		flex: 1;
		min-height: 0;
		padding-top: 2px;
		overflow: hidden;
	}

	.navtree li {
		display: flex;
		flex-direction: column;
		align-items: flex-start;
	}

	.folder {
		display: flex;
		align-items: center;
		gap: 5px;
		height: 30px;
		padding-left: 3px;
	}

	.folder em {
		width: 38px;
		height: 13px;
		margin-left: 1px;
		background: #ffd967;
		color: #b8922c;
		font: bold 10px/13px 'Liberation Serif', serif;
	}

	.leaf {
		display: flex;
		align-items: center;
		gap: 7px;
		width: 119px;
		height: 26px;
		margin: 2px 0 2px 49px;
		padding-left: 4px;
		overflow: hidden;
	}

	.leaf.selected {
		background: #c8d9f0;
	}

	.thumb {
		position: absolute;
		right: 4px;
		top: 97px;
		width: 10px;
		height: 421px;
		border-radius: 5px;
		background: #cbcbcb;
	}

	.side {
		display: flex;
		flex-direction: column;
		gap: 6px;
		width: 344px;
		margin-right: 7px;
	}

	.complist,
	.props {
		display: flex;
		flex-direction: column;
		border-left: 1px solid #b4b4b4;
	}

	.complist {
		height: 535px;
		border-bottom: 1px solid #a8a8a8;
	}

	.props {
		flex: 1;
		min-height: 0;
		overflow: hidden;
	}

	.tabs {
		flex: none;
		height: 29px;
		border-top: 1px solid #c8cbce;
		border-bottom: 1px solid #c8cbce;
		background: #dedede;
	}

	.tabs button {
		width: 81px;
		height: 27px;
		border-right: 1px solid #c8cbce;
		background: #f0f0f0;
		font-weight: 500;
		line-height: 24px;
		color: #333;
	}

	.comptools {
		display: flex;
		flex: none;
		align-items: center;
		gap: 10px;
		height: 35px;
		padding-left: 8px;
		border-bottom: 1px solid #c8cbce;
		background: #eee;
	}

	.comptools button {
		display: flex;
		align-items: center;
		gap: 5px;
	}

	.complist > input {
		flex: none;
		height: 24px;
		padding-left: 2px;
		border-bottom: 1px solid #b8b8b8;
	}

	.complist > input::placeholder,
	.find input::placeholder {
		color: #8a8a8a;
	}

	.comptree {
		display: flex;
		flex-direction: column;
		padding-top: 2px;
	}

	.root {
		display: flex;
		align-items: center;
		gap: 12px;
		height: 30px;
	}

	.comptree .root {
		gap: 8px;
		padding-left: 12px;
	}

	.comptree .item {
		height: 26px;
		margin: 2px 0 2px 50px;
		padding-left: 4px;
		text-align: left;
	}

	.selected {
		background: #b2ccee;
	}

	.proprow {
		display: flex;
		align-items: flex-start;
	}

	.props table {
		flex: 1;
		width: 0;
	}

	.props .no {
		width: 28px;
	}

	.props .name {
		width: 125px;
	}

	.props .extra {
		width: 50px;
	}

	.props th,
	.props td {
		height: 26px;
		padding: 0 0 0 3px;
		border-right: 1px solid #cfcfcf;
		border-bottom: 1px solid #cfcfcf;
		white-space: nowrap;
		line-height: 20px;
	}

	.props th {
		padding: 0;
		background: #eee;
		color: #555;
		font-weight: 400;
		text-align: center;
	}

	.props th.selected {
		background: #80baf8;
		color: #fff;
		font-weight: 700;
	}

	.shade {
		background: #ededed;
	}

	.plus {
		width: 16px;
		height: 16px;
		margin-right: 7px;
		border: 1px solid #888;
		border-radius: 2px;
		line-height: 13px;
	}

	.track {
		width: 20px;
		padding: 136px 4px 0 7px;
	}

	.track i {
		display: block;
		height: 200px;
		background: #c8c8c8;
		border-radius: 4px;
	}

	.canvas {
		display: flex;
		flex: 1;
		flex-direction: column;
		justify-content: flex-end;
		min-width: 0;
		margin-right: 9px;
		background: #000;
		font-family: 'Noto Sans CJK SC', sans-serif;
	}

	.layers {
		width: 254px;
	}

	.layers h2 {
		line-height: 24px;
	}

	.layertabs {
		display: flex;
		align-items: flex-end;
		gap: 5px;
		height: 36px;
		border-bottom: 1px solid #c8cbce;
		background: #eee;
		color: #555;
	}

	.layertabs button {
		width: 92px;
		height: 28px;
		border-radius: 4px 4px 0 0;
		background: #dcdcdc;
	}

	.layertabs .on {
		width: 94px;
		background: #fff;
		color: #3a8ee8;
	}

	.layers table {
		width: 100%;
		margin-top: 3px;
		border-left: 1px solid #c4c4c4;
	}

	.show {
		width: 79px;
	}

	.rest {
		width: 10px;
	}

	.layers th,
	.layers td {
		height: 26px;
		padding: 0 0 0 52px;
		border-right: 1px solid #d4d4d4;
		border-bottom: 1px solid #d4d4d4;
		white-space: nowrap;
		line-height: 20px;
	}

	.layers tr:nth-child(5n) td {
		height: 27px;
	}

	.layers th {
		background: #eee;
		color: #555;
		font-weight: 400;
		text-align: left;
	}

	.layers th.hot {
		padding: 0;
		background: #80baf8;
		color: #fff;
		font-weight: 700;
		text-align: center;
	}

	.layers td.parent {
		padding-left: 40px;
	}

	.layers .box {
		padding: 0;
	}

	.layers .box input {
		margin: auto;
	}

	.layers .current {
		outline: 2px solid #8a8a8a;
		outline-offset: -2px;
	}

	.layers td:last-child,
	.layers th:last-child {
		padding: 0;
	}

	.reset {
		display: block;
		width: 60px;
		height: 28px;
		margin: 9px 0 0 223px;
		border: 1px solid #c8c8c8;
		border-radius: 3px;
	}

	/* report dialog */
	.dialog {
		position: absolute;
		inset: 108px 191px 64px 282px;
		display: flex;
		flex-direction: column;
		border: solid #bac4d4;
		border-width: 0 2px 1px;
		background: #eee;
		box-shadow: 2px 3px 5px rgba(0, 0, 0, 0.6);
	}

	.titlebar {
		display: flex;
		flex: none;
		align-items: center;
		gap: 23px;
		height: 34px;
		margin: 0 -2px;
		padding: 0 12px 0 11px;
		background: #2d7fe2;
		color: #fff;
	}

	.titlebar h1 {
		flex: 1;
	}

	.titlebar button {
		display: flex;
	}

	.toolbar {
		display: flex;
		flex: none;
		align-items: center;
		height: 38px;
		padding-left: 2px;
		border-bottom: 2px solid #cacfd4;
		background: #fff;
		color: #333;
	}

	.toolbar button,
	.sheet .bar button {
		display: flex;
		align-items: center;
		gap: 5px;
		height: 27px;
		padding: 0 7px;
	}

	.toolbar .framed {
		padding: 0 6px 0 5px;
		border: 1px solid #4fa0f0;
		border-radius: 4px;
	}

	.toolbar .export {
		padding-right: 2px;
	}

	.find {
		display: flex;
		align-items: center;
		width: 150px;
		height: 32px;
		padding: 0 9px 0 2px;
		border: 1px solid #b0b0b0;
	}

	.find input {
		flex: 1;
	}

	.toolbar .position {
		gap: 16px;
		padding: 0 4px;
	}

	.panes {
		display: flex;
		flex: 1;
		gap: 7px;
		min-height: 0;
	}

	.reports,
	.elements {
		display: flex;
		flex-direction: column;
		width: 326px;
	}

	.elements {
		width: 320px;
	}

	.tab {
		flex: none;
		width: 120px;
		height: 31px;
		margin-top: 5px;
		border: 1px solid #d4d4d4;
		border-bottom: 0;
		border-radius: 4px 4px 0 0;
		background: #fff;
		color: #3a8ee8;
	}

	.tree {
		position: relative;
		flex: 1;
		min-height: 0;
		padding: 2px 0 0 9px;
		border: 1px solid #b8b8b8;
		overflow: hidden;
		background: #fff;
	}

	.reports .tree {
		border-width: 2px 2px 1px 1px;
		border-color: #c0c0c0;
		padding-top: 1px;
	}

	.doc {
		display: flex;
		align-items: center;
		gap: 8px;
		height: 30px;
		min-width: 216px;
		margin-left: 42px;
		padding: 0 3px;
	}

	.page {
		fill: #f7f9ff;
	}

	.foot {
		fill: #b9ccff;
	}

	.doc.selected .page {
		fill: #7db4f4;
	}

	.doc.selected .foot {
		fill: #5a9cf0;
	}

	.elements .bar {
		display: flex;
		flex: none;
		align-items: center;
		gap: 16px;
		height: 34px;
		margin-bottom: 8px;
		padding-left: 8px;
		border: 1px solid #cacfd4;
		background: #fff;
		color: #333;
	}

	.child {
		display: block;
		width: 250px;
		height: 30px;
		margin-left: 41px;
		padding-left: 4px;
		text-align: left;
	}

	.tree .thumb {
		top: 20px;
		height: 296px;
	}

	.sheet {
		display: flex;
		flex: 1;
		flex-direction: column;
		min-width: 0;
	}

	.sheet .bar {
		display: flex;
		flex: none;
		align-items: center;
		height: 36px;
		margin-bottom: 7px;
		padding-left: 1px;
		border: 1px solid #cacfd4;
		border-right: 0;
		background: #fff;
		color: #333;
	}

	.sheet .bar button {
		gap: 4px;
	}

	.sheet .pick {
		width: 104px;
		height: 32px;
	}

	.rooms {
		display: flex;
		align-items: center;
		gap: 4px;
		margin-left: 3px;
		white-space: nowrap;
		color: #111;
	}

	.grid {
		position: relative;
		flex: 1;
		min-height: 0;
		padding: 0 16px 18px 0;
		background: #fff;
	}

	.clip {
		height: 100%;
		overflow: hidden;
	}

	.clip table {
		width: 0;
		color: #000;
	}

	.clip th,
	.clip td {
		padding: 0 3px 2px;
		border-right: 1px solid #000;
		border-bottom: 1px solid #000;
		text-align: right;
		word-break: break-all;
		font: 12px/18px 'DejaVu Sans Mono', monospace;
	}

	.clip th {
		font: bold 16px/18px 'Noto Sans CJK SC', sans-serif;
		text-align: center;
	}

	.clip .caption th {
		border-top: 1px solid #000;
	}

	.clip th.num {
		padding: 0;
		border-color: #ccc;
		background: #efefef;
		color: #555;
		font: 15px/18px 'Noto Sans CJK SC', sans-serif;
		word-break: normal;
	}

	.clip td.text,
	.clip td.measure {
		padding-bottom: 4px;
		font: 15px/18px 'Noto Sans CJK SC', sans-serif;
		text-align: center;
	}

	.clip td.measure {
		white-space: pre;
	}

	.clip td.grade {
		text-align: center;
	}

	.caption {
		height: 24px;
	}

	.names {
		height: 76px;
	}

	.line {
		height: 24px;
	}

	.last {
		height: 23px;
	}

	.total {
		height: 41px;
	}

	.clip .total td,
	.clip .total th:not(.num) {
		padding-bottom: 4px;
	}

	.clip .total td {
		font: bold 14px/18px 'DejaVu Sans Mono', monospace;
	}

	.vthumb,
	.hthumb,
	.pointer {
		position: absolute;
	}

	.vthumb {
		right: 3px;
		top: 17px;
		width: 10px;
		height: 401px;
		border-radius: 5px;
		background: #cbcbcb;
	}

	.hthumb {
		left: 17px;
		bottom: 4px;
		width: 510px;
		height: 10px;
		border-radius: 5px;
		background: #cbcbcb;
	}

	.pointer {
		left: 80px;
		top: 272px;
	}

	.dialog footer {
		display: flex;
		flex: none;
		align-items: flex-end;
		justify-content: flex-end;
		height: 30px;
		padding: 0 3px 4px 0;
		background: #dcdcde;
	}
</style>
